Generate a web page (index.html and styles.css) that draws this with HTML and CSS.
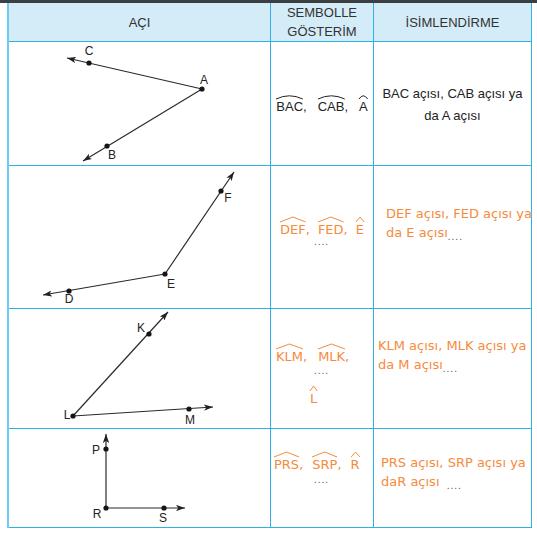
FILE: index.html
```html
<!DOCTYPE html>
<html>
<head>
  <title>Açılar</title>
  <link rel="stylesheet" href="styles.css">
</head>
<body>
  <div class="top-bar"></div>
  <div class="angle-table">
    <div class="cell head">AÇI</div>
    <div class="cell head">SEMBOLLE<br>GÖSTERİM</div>
    <div class="cell head">İSİMLENDİRME</div>

    <!-- BAC -->
    <div class="cell">
      <svg class="angle-svg" width="260" height="123" viewBox="9 42 260 123">
        <defs>
          <marker id="arrow1" viewBox="0 0 10 7" refX="10" refY="3.5" markerWidth="9" markerHeight="6.3" markerUnits="userSpaceOnUse" orient="auto">
            <path d="M0,0 L10,3.5 L0,7 L2.5,3.5 z"/>
          </marker>
        </defs>
        <line x1="202" y1="89" x2="67" y2="58" marker-end="url(#arrow1)"/>
        <line x1="202" y1="89" x2="83" y2="161" marker-end="url(#arrow1)"/>
        <circle cx="202" cy="89" r="2.6"/>
        <circle cx="89" cy="63" r="2.6"/>
        <circle cx="107" cy="146" r="2.6"/>
        <text x="89" y="55">C</text>
        <text x="204" y="84">A</text>
        <text x="112" y="159">B</text>
      </svg>
    </div>
    <div class="cell symbols sym-bac">
      <div class="sym-line">
        <span><span class="mark">BAC<svg viewBox="0 0 100 5" preserveAspectRatio="none"><path d="M0,5 Q50,-3 100,5"/></svg></span>,</span>
        <span><span class="mark">CAB<svg viewBox="0 0 100 5" preserveAspectRatio="none"><path d="M0,5 Q50,-3 100,5"/></svg></span>,</span>
        <span><span class="mark">A<svg viewBox="0 0 100 5" preserveAspectRatio="none"><path d="M0,5 Q50,-3 100,5"/></svg></span></span>
      </div>
    </div>
    <div class="cell naming naming-black">BAC açısı, CAB açısı ya<br>da A açısı</div>

    <!-- DEF -->
    <div class="cell">
      <svg class="angle-svg" width="260" height="142" viewBox="9 166 260 142">
        <defs>
          <marker id="arrow2" viewBox="0 0 10 7" refX="10" refY="3.5" markerWidth="9" markerHeight="6.3" markerUnits="userSpaceOnUse" orient="auto">
            <path d="M0,0 L10,3.5 L0,7 L2.5,3.5 z"/>
          </marker>
        </defs>
        <line x1="165" y1="274" x2="234" y2="172" marker-end="url(#arrow2)"/>
        <line x1="165" y1="274" x2="43" y2="295" marker-end="url(#arrow2)"/>
        <circle cx="165" cy="274" r="2.6"/>
        <circle cx="221" cy="191" r="2.6"/>
        <circle cx="69" cy="291" r="2.6"/>
        <text x="228" y="202">F</text>
        <text x="171" y="288">E</text>
        <text x="69" y="303">D</text>
      </svg>
    </div>
    <div class="cell symbols symbols-orange sym-def">
      <div class="sym-line">
        <span><span class="mark">DEF<svg viewBox="0 0 100 5" preserveAspectRatio="none"><path d="M0,5 L50,0 L100,5"/></svg></span>,</span>
        <span><span class="mark">FED<svg viewBox="0 0 100 5" preserveAspectRatio="none"><path d="M0,5 L50,0 L100,5"/></svg></span>,</span>
        <span><span class="mark">E<svg viewBox="0 0 100 5" preserveAspectRatio="none"><path d="M0,5 L50,0 L100,5"/></svg></span></span>
      </div>
      <div class="sym-dots">....</div>
    </div>
    <div class="cell naming naming-orange naming-def">DEF açısı, FED açısı ya<br>da E açısı<span class="name-dots">....</span></div>

    <!-- KLM -->
    <div class="cell">
      <svg class="angle-svg" width="260" height="119" viewBox="9 309 260 119">
        <defs>
          <marker id="arrow3" viewBox="0 0 10 7" refX="10" refY="3.5" markerWidth="9" markerHeight="6.3" markerUnits="userSpaceOnUse" orient="auto">
            <path d="M0,0 L10,3.5 L0,7 L2.5,3.5 z"/>
          </marker>
        </defs>
        <line x1="73" y1="416" x2="168" y2="312" marker-end="url(#arrow3)"/>
        <line x1="73" y1="416" x2="213" y2="407" marker-end="url(#arrow3)"/>
        <circle cx="73" cy="416" r="2.6"/>
        <circle cx="149" cy="334" r="2.6"/>
        <circle cx="189" cy="409" r="2.6"/>
        <text x="141" y="332">K</text>
        <text x="67" y="419">L</text>
        <text x="190" y="424">M</text>
      </svg>
    </div>
    <div class="cell symbols symbols-orange sym-klm">
      <div class="sym-line">
        <span><span class="mark">KLM<svg viewBox="0 0 100 5" preserveAspectRatio="none"><path d="M0,5 L50,0 L100,5"/></svg></span>,</span>
        <span><span class="mark">MLK<svg viewBox="0 0 100 5" preserveAspectRatio="none"><path d="M0,5 L50,0 L100,5"/></svg></span>,</span>
      </div>
      <div class="sym-dots">....</div>
      <div class="sym-single"><span class="mark">L<svg viewBox="0 0 100 5" preserveAspectRatio="none"><path d="M0,5 L50,0 L100,5"/></svg></span></div>
    </div>
    <div class="cell naming naming-orange naming-klm">KLM açısı, MLK açısı ya<br>da M açısı<span class="name-dots">....</span></div>

    <!-- PRS -->
    <div class="cell">
      <svg class="angle-svg" width="260" height="98" viewBox="9 429 260 98">
        <defs>
          <marker id="arrow4" viewBox="0 0 10 7" refX="10" refY="3.5" markerWidth="9" markerHeight="6.3" markerUnits="userSpaceOnUse" orient="auto">
            <path d="M0,0 L10,3.5 L0,7 L2.5,3.5 z"/>
          </marker>
        </defs>
        <line x1="106" y1="508" x2="106" y2="434" marker-end="url(#arrow4)"/>
        <line x1="106" y1="508" x2="185" y2="508" marker-end="url(#arrow4)"/>
        <circle cx="106" cy="508" r="2.6"/>
        <circle cx="106" cy="449" r="2.6"/>
        <circle cx="164" cy="508" r="2.6"/>
        <text x="96" y="454">P</text>
        <text x="97" y="518">R</text>
        <text x="163" y="522">S</text>
      </svg>
    </div>
    <div class="cell symbols symbols-orange sym-prs">
      <div class="sym-line">
        <span><span class="mark">PRS<svg viewBox="0 0 100 5" preserveAspectRatio="none"><path d="M0,5 L50,0 L100,5"/></svg></span>,</span>
        <span><span class="mark">SRP<svg viewBox="0 0 100 5" preserveAspectRatio="none"><path d="M0,5 L50,0 L100,5"/></svg></span>,</span>
        <span><span class="mark">R<svg viewBox="0 0 100 5" preserveAspectRatio="none"><path d="M0,5 L50,0 L100,5"/></svg></span></span>
      </div>
      <div class="sym-dots">....</div>
    </div>
    <div class="cell naming naming-orange naming-prs">PRS açısı, SRP açısı ya<br>daR açısı <span class="name-dots name-dots-far">....</span></div>
  </div>
</body>
</html>
```

FILE: styles.css
```css
body {
  margin: 0;
  background-color: #fff;
  font-family: "Liberation Sans", Arial, sans-serif;
}

.top-bar {
  height: 3px;
  background-color: #3b3f42;
}

.angle-table {
  display: grid;
  grid-template-columns: 262px 103px 158px;
  grid-template-rows: 39px 124px 143px 120px 99px;
  width: 523px;
  margin-left: 7px;
  border-left: 2px solid #6ccbf0;
}

.cell {
  box-sizing: border-box;
  border-right: 1px solid #2fb0e6;
  border-bottom: 1px solid #2fb0e6;
}

.head {
  display: flex;
  align-items: center;
  justify-content: center;
  text-align: center;
  background-color: #d4ebf8;
  color: #333;
  font-size: 13px;
  line-height: 19px;
}

/* angle drawings */
.angle-svg {
  display: block;
}

.angle-svg line {
  stroke: #2b2b2b;
  stroke-width: 1.2;
}

.angle-svg circle {
  fill: #151515;
}

.angle-svg marker path {
  fill: #222;
}

.angle-svg text {
  font-family: "Liberation Sans", Arial, sans-serif;
  font-size: 12px;
  fill: #222;
  text-anchor: middle;
}

/* symbol column */
.symbols {
  font-size: 13px;
  color: #222;
}

.symbols-orange {
  color: #f68b3c;
  font-family: "DejaVu Sans", sans-serif;
}

.sym-line {
  display: flex;
  gap: 9px;
  line-height: 16px;
  white-space: nowrap;
}

.mark {
  position: relative;
}

.mark svg {
  position: absolute;
  left: 0;
  top: -5px;
  width: 100%;
  height: 5px;
  overflow: visible;
}

.mark path {
  fill: none;
  stroke: currentColor;
  stroke-width: 1;
  vector-effect: non-scaling-stroke;
}

.sym-dots {
  font-family: "Liberation Sans", Arial, sans-serif;
  font-size: 10px;
  line-height: 8px;
  letter-spacing: 1px;
  color: #555;
  padding-left: 43px;
}

.sym-single {
  line-height: 16px;
  padding-left: 39px;
  margin-top: 16px;
}

.sym-bac {
  padding-top: 57px;
}

.sym-bac .sym-line {
  justify-content: center;
  gap: 11px;
}

.sym-bac .mark svg {
  top: -4px;
  height: 4px;
}

.sym-def {
  padding-top: 56px;
}

.sym-def .sym-line {
  justify-content: center;
  gap: 8px;
}

.sym-def .sym-dots {
  margin-top: 0;
}

.sym-klm {
  padding-top: 40px;
}

.sym-klm .sym-line {
  padding-left: 5px;
  gap: 11px;
}

.sym-klm .sym-dots {
  margin-top: 2px;
}

.sym-prs {
  padding-top: 28px;
}

.sym-prs .sym-line {
  padding-left: 3px;
}

.sym-prs .sym-dots {
  margin-top: 3px;
}

/* naming column */
.naming {
  font-size: 13px;
  white-space: nowrap;
}

.naming-black {
  display: flex;
  align-items: center;
  justify-content: center;
  text-align: center;
  color: #222;
  line-height: 22px;
  padding-top: 3px;
}

.naming-orange {
  color: #f68b3c;
  font-family: "DejaVu Sans", sans-serif;
  line-height: 19px;
}

.naming-def {
  padding: 38px 0 0 12px;
}

.naming-klm {
  padding: 27px 0 0 4px;
}

.naming-prs {
  padding: 24px 0 0 7px;
}

.name-dots {
  font-family: "Liberation Sans", Arial, sans-serif;
  font-size: 10px;
  letter-spacing: 1px;
  color: #555;
  vertical-align: -3px;
}

.name-dots-far {
  margin-left: 3px;
}
```
